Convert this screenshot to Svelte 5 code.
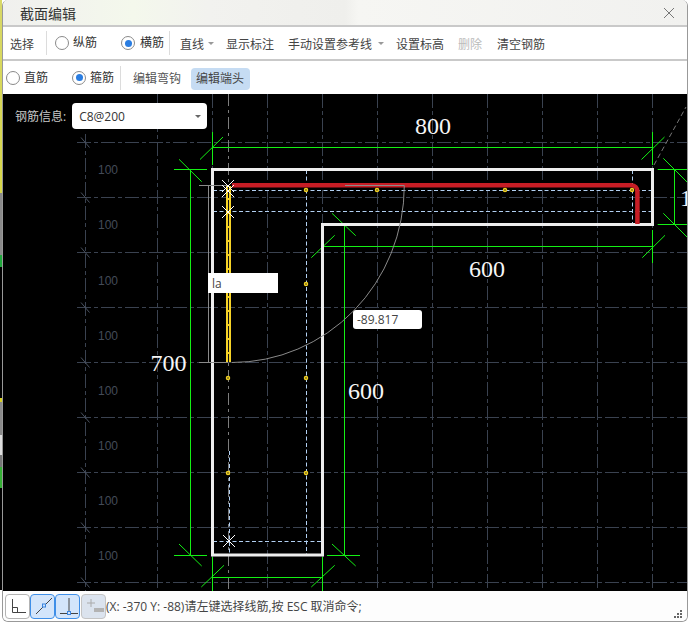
<script>
  const vGrid = [157.5, 212.5, 267.5, 322.5, 377.5, 432.5, 487.5, 542.5, 597.5, 652.5];
  const hGrid = [142.5, 197.5, 252.5, 307.5, 362.5, 417.5, 472.5, 527.5, 582.5];
  const labels = [174, 229, 285, 340, 395, 450, 505, 560];
  const nodes = [[306, 190], [377, 190], [505, 190], [632, 190], [306, 284], [306, 378], [306, 473], [228, 378], [228, 473]];
  const snaps = [[228, 186], [228, 191], [228, 212], [229, 541]];
</script>

<div class="page">
  <div class="strip"></div>
  <div class="win">
    <header class="title">
      <span>截面编辑</span>
      <svg class="close" width="12" height="12" viewBox="0 0 12 12"><path d="M1 1l10 10M11 1L1 11" /></svg>
    </header>

    <div class="bar one">
      <span class="item">选择</span>
      <i class="sep s1"></i>
      <span class="radio r1"></span><span class="rlabel tight">纵筋</span>
      <span class="radio on r2"></span><span class="rlabel">横筋</span>
      <i class="sep s2"></i>
      <span class="drop">直线</span><i class="caret"></i>
      <span class="item m1">显示标注</span>
      <span class="item m2">手动设置参考线</span><i class="caret c2"></i>
      <span class="item m3">设置标高</span>
      <span class="item m5 disabled">删除</span>
      <span class="item m2b">清空钢筋</span>
    </div>

    <div class="bar two">
      <span class="radio"></span><span class="rlabel tight">直筋</span>
      <span class="radio on r3"></span><span class="rlabel tight">箍筋</span>
      <i class="sep s3"></i>
      <span class="item m4">编辑弯钩</span>
      <span class="pressed">编辑端头</span>
    </div>

    <main class="canvas">
      <svg class="draw" width="684" height="497" viewBox="3 94 684 497">
        <g class="grid">
          {#each vGrid as x}<line x1={x} x2={x} y1="94" y2="591" />{/each}
          {#each hGrid as y}<line x1="77" x2="687" y1={y} y2={y} />{/each}
          <line x1="85.5" x2="85.5" y1="134" y2="591" />
        </g>
        <g class="ticks">
          {#each hGrid as y}<line x1="81" x2="89.5" y1={y - 5} y2={y + 5} />{/each}
        </g>
        {#each labels as y}<text class="hundred" x="98" y={y}>100</text>{/each}

        <line class="center" x1="228.5" x2="228.5" y1="94" y2="590" />
        <g class="guide">
          <line x1="306.5" x2="306.5" y1="170" y2="554" />
          <line x1="632.5" x2="632.5" y1="170" y2="224" />
          <line x1="213" x2="652" y1="190.5" y2="190.5" />
          <line x1="213" x2="652" y1="211.5" y2="211.5" />
          <line x1="213" x2="322" y1="541.5" y2="541.5" />
          <line x1="229.500" x2="229.500" y1="451" y2="554" />
        </g>

        <g class="dim">
          <path d="M212.500 132V165M652.500 132V165M212.500 147.500H652.500M200 159.500L223 137M641.500 159.500L664.500 137" />
          <path d="M190.500 169.500V555.500M174 169.500H207M174 555.500H207M179 159.300L201.700 181.700M179 544L201.700 566" />
          <path d="M344.500 224.500V555.500M327 224.500H360M327 555.500H360M332 213.300L355.700 235.700M332 544L355.700 566" />
          <path d="M322.500 230V263M652.500 230V263M322.500 246.500H652.500M311.300 257.700L334.700 235.300M642.300 257.700L665 235.300" />
          <path d="M674.500 169.500V224.500M657.700 169.500H687M657.700 224.500H687M663.300 158.300L687 182M663.300 213.300L687 237" />
          <path d="M212.500 557V591M322.500 557V591M212.500 577.500H322.500M201.300 587L224 565.300M311.300 587L334.700 565.300" />
        </g>

        <path class="wall" d="M212.500 169.500H652.500V224.500H322.500V555H212.500Z" />

        <line class="sweep" x1="654" y1="165" x2="686" y2="107" />
        <path class="leader" d="M199 185.500H228M208.500 185.500V362.500M199 362.500H228" />

        <line class="yellow" x1="228.500" x2="228.500" y1="186" y2="362" />
        <line class="yellow-core" x1="228.500" x2="228.500" y1="186" y2="362" />
        <path class="red" d="M232 185.300H631.500A6 6 0 0 1 637.400 191.300V224" />
        <path class="leader" d="M232 362.500A172.300 177 0 0 0 404.300 185.500H345" />

        {#each nodes as [x, y]}<circle class="node" cx={x} cy={y} r="1.500" />{/each}
        {#each snaps as [x, y]}<path class="snap" d="M{x - 6} {y - 6}L{x + 6} {y + 6}M{x + 6} {y - 6}L{x - 6} {y + 6}" />{/each}

        <text class="size" x="415" y="134">800</text>
        <text class="size" x="469" y="277">600</text>
        <text class="size" x="150.500" y="371">700</text>
        <text class="size" x="348" y="399">600</text>
        <text class="size" x="680" y="206">100</text>
      </svg>

      <div class="info">
        <span class="info-label">钢筋信息:</span>
        <div class="combo"><span>C8@200</span><i class="caret dark"></i></div>
      </div>
      <div class="la">la</div>
      <div class="angle">-89.817</div>
    </main>

    <footer class="status">
      <button class="tool" aria-label="正交">
        <svg width="20" height="20" viewBox="0 0 20 20"><path d="M4.500 3V16.500H18M4.500 11.500H9.500V16.500" /></svg>
      </button>
      <button class="tool active" aria-label="捕捉中点">
        <svg width="20" height="20" viewBox="0 0 20 20"><path d="M3 18L19 2" /><rect x="9.500" y="8" width="3" height="3" class="blue" /></svg>
      </button>
      <button class="tool active" aria-label="捕捉垂足">
        <svg width="20" height="20" viewBox="0 0 20 20"><path d="M2 17.500H20M11 2V16" /><rect x="9.500" y="15.500" width="3" height="3" class="blue" /></svg>
      </button>
      <button class="tool off" aria-label="动态输入">
        <svg width="20" height="20" viewBox="0 0 20 20"><path class="pale" d="M3 7H11M7 3V11" /><rect x="10" y="12" width="10" height="4" class="paler" /></svg>
      </button>
      <span class="msg">(X: -370 Y: -88)请左键选择线筋,按 ESC 取消命令;</span>
      <svg class="grip" width="9" height="8" viewBox="0 0 9 8">
        <rect x="6" y="0" width="2" height="2" /><rect x="3" y="3" width="2" height="2" /><rect x="6" y="3" width="2" height="2" />
        <rect x="0" y="6" width="2" height="2" /><rect x="3" y="6" width="2" height="2" /><rect x="6" y="6" width="2" height="2" />
      </svg>
    </footer>
  </div>
</div>

<style>
  :global(body) { margin: 0; background: #fff; }
  .page { width: 689px; height: 624px; display: flex; overflow: hidden; background: #fff;
    font-family: "Open Sans", "Noto Sans CJK SC", sans-serif; font-size: 12px; color: #444; }
  .strip { width: 2px; height: 590px; flex: none;
    background: linear-gradient(180deg, #d8d868 0, #d8d84a 193px, #8a8a8a 193px, #8a8a8a 255px, #1fa83c 255px, #1fa83c 267px,
      #000 267px, #000 398px, #d8d020 398px, #d8d020 402px, #8a8a8a 402px, #8a8a8a 435px, #ddd 435px, #ddd 455px, #777 455px, #777 467px,
      #35b035 467px, #35b035 488px, #000 488px); }
  .win { width: 686px; height: 622px; flex: none; box-sizing: border-box; display: flex; flex-direction: column;
    border-right: 1px solid #999; border-left: 1px solid #999; border-bottom: 1px solid #999; border-radius: 6px; background: #fff; overflow: hidden; }
  .title { height: 25px; flex: none; display: flex; align-items: center; justify-content: space-between; padding: 0 12px 0 17px;
    font-size: 14px; color: #333; background: linear-gradient(90deg, #f0f0ee 0, #f4f8ec 19%, #f2f2ef 30%, #efefec 50%, #f6f6f3 52%, #f1f1ef 100%); border-bottom: 2px solid #c9c9c9; }
  .close path { stroke: #777; stroke-width: 1; fill: none; }
  .bar { flex: none; display: flex; align-items: center; background: #fff; }
  .one { height: 32px; padding-left: 7px; border-bottom: 2px solid #c9c9c9; }
  .two { height: 33px; padding-left: 3px; }
  .item, .rlabel, .drop { white-space: nowrap; line-height: 16px; }
  .one .item { padding-top: 3px; }
  .rlabel { margin-left: 5px; color: #333; }
  .rlabel.tight { margin-left: 4px; }
  .radio { width: 12px; height: 12px; flex: none; border: 1px solid #8a8a8a; border-radius: 50%; background: #fff; position: relative; }
  .radio.on::after { content: ""; position: absolute; left: 2.500px; top: 2.500px; width: 7px; height: 7px; border-radius: 50%; background: #2a7de1; }
  .sep { width: 1px; height: 24px; flex: none; background: #dcdcdc; }
  .s1 { margin: 0 8px 0 12px; }
  .r2 { margin-left: 24px; }
  .s2 { margin: 0 4px 0 5px; }
  .drop { padding: 3px 3px 0; margin-left: 3px; width: 24px; }
  .caret { width: 0; height: 0; flex: none; border: 3px solid transparent; border-top: 3px solid #999; border-bottom: 0; margin-left: 1px; }
  .m1 { margin-left: 12px; }
  .m2 { margin-left: 14px; }
  .c2 { margin-left: 6px; }
  .m3 { margin-left: 12px; }
  .m5 { margin-left: 14px; }
  .m2b { margin-left: 15px; }
  .disabled { color: #bbb; }
  .r3 { margin-left: 24px; }
  .s3 { margin: 0 12px 0 6px; }
  .m4 { padding-top: 3px; color: #555; }
  .pressed { margin-left: 10px; margin-top: 3px; height: 22px; width: 59px; box-sizing: border-box; padding-left: 5px; line-height: 22px; background: #c6dcf3; border-radius: 4px; color: #444; }
  .canvas { position: relative; height: 497px; flex: none; background: #000; overflow: hidden; }
  .draw { display: block; }
  .grid line { stroke: #3a4250; stroke-width: 1; stroke-dasharray: 14 3 4 3; fill: none; }
  .ticks line { stroke: #4a5260; stroke-width: 1; }
  .hundred { fill: #434b58; font: 12px "Liberation Sans", sans-serif; }
  .center { stroke: #7d7d7d; stroke-width: 1; stroke-dasharray: 12 4 3 4; }
  .guide line { stroke: #b2d0f2; stroke-width: 1; stroke-dasharray: 4 2.500; }
  .dim path { stroke: #14f014; stroke-width: 1; fill: none; }
  .wall { fill: none; stroke: #eeeeee; stroke-width: 3; }
  .sweep { stroke: #777; stroke-width: 1; stroke-dasharray: 5 3; }
  .leader { stroke: #8a8a8a; stroke-width: 1; fill: none; }
  .yellow { stroke: #f6d327; stroke-width: 5; }
  .yellow-core { stroke: #111; stroke-width: 1; stroke-dasharray: 12 2; }
  .red { fill: none; stroke: #c71d25; stroke-width: 4.500; }
  .node { fill: #222; stroke: #f0d020; stroke-width: 1.500; }
  .snap { stroke: #fff; stroke-width: 1; fill: none; }
  .size { fill: #f6f6f6; font: 24px "Liberation Serif", serif; }
  .info { position: absolute; left: 12px; top: 9px; display: flex; align-items: center; gap: 6px; }
  .info-label { color: #c8c8c8; }
  .combo { width: 135px; height: 26px; box-sizing: border-box; background: #fff; border-radius: 4px; display: flex; align-items: center; justify-content: space-between; padding: 0 6px 0 7px; color: #333; }
  .dark { border-top-color: #666; }
  .la { position: absolute; left: 205px; top: 179px; width: 70px; height: 20px; background: #fff; padding-left: 4px; box-sizing: border-box; line-height: 22px; color: #444; }
  .angle { position: absolute; left: 350px; top: 216px; width: 69px; height: 19px; box-sizing: border-box; background: #fff; border-radius: 3px; padding-left: 4px; line-height: 19px; color: #444; }
  .status { height: 30px; flex: none; display: flex; align-items: center; background: #fdfdfd; padding: 0 0 0 2px; position: relative; }
  .tool { width: 25px; height: 25px; box-sizing: border-box; padding: 0; margin: 0; border: 1px solid #b3b3b3; border-radius: 4px; background: #fff; display: flex; align-items: center; justify-content: center; }
  .tool svg path { stroke: #444; stroke-width: 1; fill: none; }
  .tool .blue { fill: #cfe2fa; stroke: #3b86e0; stroke-width: 1; }
  .active { background: #d3e5fb; border-color: #3f8fe8; }
  .off { background: #dbe3ee; border-color: #c4c4c4; margin-left: 1px; }
  .tool svg .pale { stroke: #aaa; }
  .tool .paler { fill: #b3b3b3; }
  .msg { white-space: nowrap; color: #444; font-size: 12px; }
  .grip { position: absolute; right: 4px; bottom: 3px; }
  .grip rect { fill: #666; }
</style>
